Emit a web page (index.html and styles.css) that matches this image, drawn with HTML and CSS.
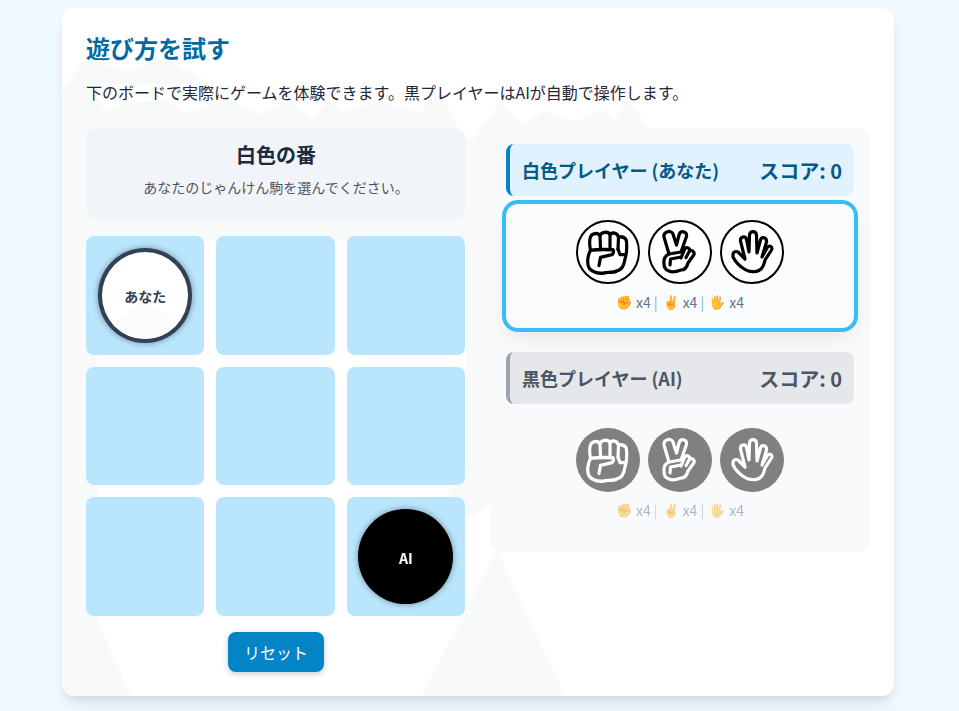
FILE: index.html
```html
<!DOCTYPE html>
<html lang="ja">
<head>
    <meta charset="UTF-8">
    <meta name="viewport" content="width=device-width, initial-scale=1.0">
    <title>遊び方を試す</title>
    <link rel="stylesheet" href="styles.css">
</head>
<body>

<svg class="defs" width="0" height="0" aria-hidden="true">
    <symbol id="rock" viewBox="0 0 64 64">
        <g transform="translate(0 -1) scale(1 1.08)">
            <path d="M14.500 29 C13.500 24 13.500 19 14.500 16.500 C16 13 22 12.500 24 15.500 C25 12 32 11 34 14.500 C36 12 41.500 12.500 42.500 17 C45 15.500 50.500 17 50.500 21 C51 27 50.500 33 49 37 C48 43 45 47.500 41 48 C37 50 31 49 28 50 C22 51 16 49 13.500 46 C10.500 42 11.500 34 14.500 29 Z"/>
            <path d="M14.500 29 C22 28 30 28 37 28.500 C38 30 37.500 32 36 33 L24.500 35.500 L23 43"/>
            <path d="M24 15.500 L24.500 27"/>
            <path d="M34 14.500 L34 27"/>
            <path d="M42.500 17 L42 28"/>
            <path d="M42 28 L44 33 L49 33"/>
        </g>
    </symbol>
    <symbol id="scissors" viewBox="0 0 64 64">
        <path d="M21 34 L16 17 C15 12 23 9 25 14 L28.500 25 L31 15 C32.500 10 39.500 11 38.500 16.500 L33 32 L37 28.500 C39 26.500 42 28 41.500 31 C43 29.500 47 31.500 46 34.500 L40 43 C39 47 37 50 33 50 C29 51.500 25 53 21 51 C17 50 15.500 46 16 41 C16 38 18 35.500 21 34 Z"/>
        <path d="M21 34 L33 32"/>
        <path d="M22 45 L22.500 39 L33 37"/>
        <path d="M33 38 L37 28.500"/>
        <path d="M38 37.500 L41.500 31"/>
    </symbol>
    <symbol id="paper" viewBox="0 0 64 64">
        <path d="M13 34 C13.500 31.500 16 31 18 32 L25 39 L20.500 21 C20 16.500 25.500 15.500 26.500 19.500 L29 32 L29.500 15 C30 10.500 36 10.500 36.500 15 L37 33 L40.500 20 C42 16 47 17.500 46.500 22 L42 37 L47 28 C49 24.500 53 26.500 51.500 30 L45 40 C44 45 43 48.500 39 50.500 C35 52.500 29 52 25 49.500 C20 46.500 15 41 13 37 Z"/>
    </symbol>
</svg>

<div class="card">
    <svg class="mountains" viewBox="62 8 832 688" aria-hidden="true">
        <polygon class="rock" points="62,90 87,58 128,72 165,58 190,72 225,92 440,92 470,150 466,240 93,240 62,240"/>
        <polygon class="snow" points="92,84 470,84 436,95 420,112 380,102 343,111 328,100 313,118 290,102 260,114 235,102 212,104 187,114 165,100 130,102 104,111"/>
        <polygon class="rock" points="62,230 90,225 97,240 97,621 131,696 62,696"/>
        <polygon class="rock" points="473,140 500,102 523,124 545,110 575,122 600,110 615,120 628,100 650,130 650,300 473,300"/>
        <polygon class="rock" points="447,497 466,465 466,140 500,140 500,500 466,520"/>
        <polygon class="rock" points="422,696 497,550 565,696"/>
    </svg>

    <h2 class="title">遊び方を試す</h2>
    <p class="intro">下のボードで実際にゲームを体験できます。黒プレイヤーはAIが自動で操作します。</p>

    <div class="game">
        <div class="board-side">
            <div class="turn">
                <h3>白色の番</h3>
                <p>あなたのじゃんけん駒を選んでください。</p>
            </div>
            <div class="board">
                <div class="cell"><div class="piece piece-white"><span>あなた</span></div></div>
                <div class="cell"></div>
                <div class="cell"></div>
                <div class="cell"></div>
                <div class="cell"></div>
                <div class="cell"></div>
                <div class="cell"></div>
                <div class="cell"></div>
                <div class="cell"><div class="piece piece-black"><span>AI</span></div></div>
            </div>
            <button class="reset">リセット</button>
        </div>

        <div class="players">
            <div class="player-head head-white">
                <span>白色プレイヤー (あなた)</span>
                <span class="score">スコア: 0</span>
            </div>
            <div class="hand selected">
                <div class="choices">
                    <div class="choice choice-white"><svg><use href="#rock"/></svg></div>
                    <div class="choice choice-white"><svg><use href="#scissors"/></svg></div>
                    <div class="choice choice-white"><svg><use href="#paper"/></svg></div>
                </div>
                <div class="counts">
                    <span class="emoji">✊</span><span>x4</span><span class="sep">|</span>
                    <span class="emoji">✌️</span><span>x4</span><span class="sep">|</span>
                    <span class="emoji">🖐️</span><span>x4</span>
                </div>
            </div>

            <div class="player-head head-black">
                <span>黒色プレイヤー (AI)</span>
                <span class="score">スコア: 0</span>
            </div>
            <div class="hand waiting">
                <div class="choices">
                    <div class="choice choice-black"><svg><use href="#rock"/></svg></div>
                    <div class="choice choice-black"><svg><use href="#scissors"/></svg></div>
                    <div class="choice choice-black"><svg><use href="#paper"/></svg></div>
                </div>
                <div class="counts">
                    <span class="emoji">✊</span><span>x4</span><span class="sep">|</span>
                    <span class="emoji">✌️</span><span>x4</span><span class="sep">|</span>
                    <span class="emoji">🖐️</span><span>x4</span>
                </div>
            </div>
        </div>
    </div>
</div>

</body>
</html>
```

FILE: styles.css
```css
body {
    font-family: "Noto Sans CJK JP", "Noto Sans", sans-serif;
    margin: 0;
    padding: 8px 65px 15px 62px;
    background-color: #f0f9ff;
    color: #1f2937;
}
.defs {
    display: block;
    height: 0;
}
.card {
    position: relative;
    overflow: hidden;
    height: 688px;
    box-sizing: border-box;
    padding: 24px;
    background: white;
    border-radius: 12px;
    box-shadow: 0 10px 15px -3px rgba(0, 0, 0, 0.1), 0 4px 6px -2px rgba(0, 0, 0, 0.05);
}
.mountains {
    position: absolute;
    top: 0;
    left: 0;
    width: 832px;
    height: 688px;
}
.mountains .rock {
    fill: #f8fafa;
}
.mountains .snow {
    fill: #ffffff;
}
.title {
    position: relative;
    margin: 0 0 16px;
    font-size: 24px;
    line-height: 32px;
    font-weight: 700;
    color: #0369a1;
}
.intro {
    position: relative;
    margin: 0 0 24px;
    font-size: 16px;
    line-height: 24px;
}
.game {
    position: relative;
    display: grid;
    grid-template-columns: 380px 380px;
    gap: 24px;
    align-items: start;
}
.turn {
    height: 92px;
    box-sizing: border-box;
    padding: 13px 16px;
    margin-bottom: 16px;
    background: #f1f5f9;
    border-radius: 12px;
    text-align: center;
}
.turn h3 {
    margin: 0 0 8px;
    font-size: 20px;
    line-height: 28px;
    font-weight: 700;
    color: #1e293b;
}
.turn p {
    margin: 0;
    font-size: 14px;
    line-height: 20px;
    color: #4b5563;
}
.board {
    display: grid;
    grid-template-columns: repeat(3, 1fr);
    grid-template-rows: repeat(3, 118.67px);
    gap: 12px;
    width: 379px;
    margin-bottom: 16px;
}
.cell {
    display: flex;
    align-items: center;
    justify-content: center;
    background: #bae6fd;
    border-radius: 8px;
}
.piece {
    position: relative;
    overflow: hidden;
    width: 80%;
    height: 80%;
    box-sizing: border-box;
    padding-top: 2px;
    display: flex;
    align-items: center;
    justify-content: center;
    border-radius: 50%;
    font-size: 14px;
    font-weight: 700;
    box-shadow: 0 0 6px rgba(0, 0, 0, 0.4);
}
.piece span {
    position: relative;
}
.piece-white {
    background: white;
    border: 4px solid #334155;
    color: #374151;
}
.piece-white::before {
    content: "";
    position: absolute;
    left: 12%;
    right: 12%;
    top: 56%;
    bottom: 0;
    background: #fafbfb;
    clip-path: polygon(50% 0, 100% 60%, 100% 100%, 0 100%, 0 60%);
}
.piece-black {
    background: #000000;
    color: white;
}
.reset {
    display: block;
    margin: 0 auto;
    width: 96px;
    height: 40px;
    padding: 0;
    background-color: #0284c7;
    color: white;
    border: none;
    border-radius: 8px;
    font-family: inherit;
    font-size: 16px;
    font-weight: 400;
    box-shadow: 0 2px 6px rgba(0, 0, 0, 0.2);
    cursor: pointer;
}
.players {
    height: 424px;
    box-sizing: border-box;
    padding: 16px;
    background: #f8fafc;
    border-radius: 12px;
}
.player-head {
    display: flex;
    align-items: center;
    justify-content: space-between;
    height: 52px;
    box-sizing: border-box;
    padding: 0 12px;
    border-left: 4px solid;
    border-radius: 8px;
    font-size: 18px;
    font-weight: 700;
}
.score {
    font-size: 20px;
}
.head-white {
    background: #e0f2fe;
    border-color: #0284c7;
    color: #075985;
}
.head-black {
    background: #e5e7eb;
    border-color: #9ca3af;
    color: #4b5563;
}
.hand {
    height: 124px;
    box-sizing: border-box;
    margin: 8px 0 24px;
    padding: 16px 0 0;
    border-radius: 12px;
}
.selected {
    background: #f9fbfd;
    outline: 4px solid #38bdf8;
    box-shadow: 0 10px 20px rgba(0, 0, 0, 0.08);
}
.choices {
    display: flex;
    justify-content: center;
    gap: 8px;
}
.choice {
    width: 64px;
    height: 64px;
    box-sizing: border-box;
    border-radius: 50%;
    overflow: hidden;
}
.choice svg {
    display: block;
    width: 64px;
    height: 64px;
    fill: none;
    stroke-width: 3.2;
    stroke-linecap: round;
    stroke-linejoin: round;
}
.choice-white {
    background: white;
    border: 2px solid #000000;
    stroke: #000000;
}
.choice-white svg {
    margin: -2px;
}
.choice-black {
    background: #808080;
    stroke: white;
}
.counts {
    display: flex;
    justify-content: center;
    align-items: center;
    margin-top: 8px;
    font-size: 14px;
    line-height: 20px;
    color: #64748b;
}
.emoji {
    width: 16px;
    margin-right: 4px;
    text-align: center;
    font-size: 13px;
    filter: hue-rotate(-8deg);
}
.sep {
    margin: 0 5px 0 3px;
    color: #7fb2d6;
}
.waiting .counts {
    opacity: 0.5;
}
```
